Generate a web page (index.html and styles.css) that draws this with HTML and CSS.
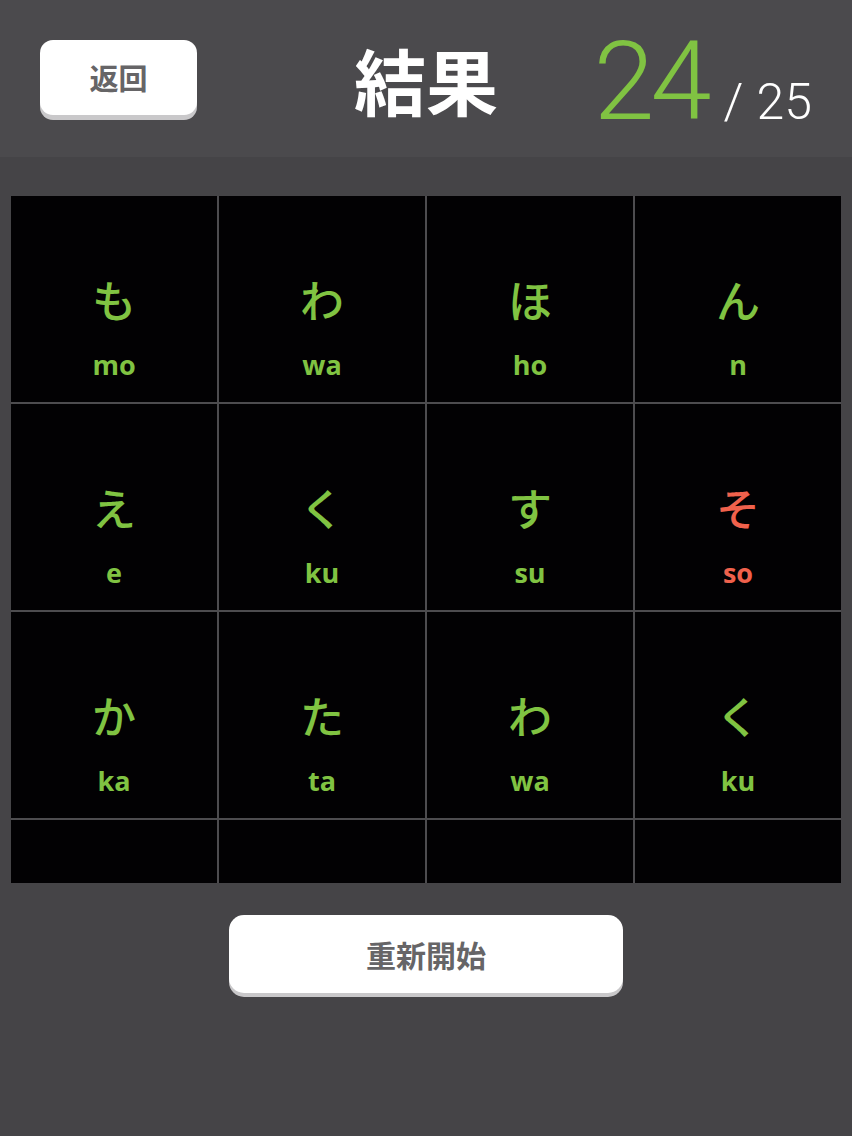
FILE: index.html
```html
<!DOCTYPE html>
<html lang="ja">
<head>
<meta charset="utf-8">
<link rel="stylesheet" href="styles.css">
</head>
<body>
<div class="page">
  <header class="header">
    <div class="left"><button class="btn back">返回</button></div>
    <h1 class="title">結果</h1>
    <div class="score"><span class="got">24</span><span class="total">/ 25</span></div>
  </header>
  <main class="board">
    <div class="grid">
      <div class="cell"><span class="kana">も</span><span class="romaji">mo</span></div>
      <div class="cell"><span class="kana">わ</span><span class="romaji">wa</span></div>
      <div class="cell"><span class="kana">ほ</span><span class="romaji">ho</span></div>
      <div class="cell"><span class="kana">ん</span><span class="romaji">n</span></div>
      <div class="cell"><span class="kana">え</span><span class="romaji">e</span></div>
      <div class="cell"><span class="kana">く</span><span class="romaji">ku</span></div>
      <div class="cell"><span class="kana">す</span><span class="romaji">su</span></div>
      <div class="cell wrong"><span class="kana">そ</span><span class="romaji">so</span></div>
      <div class="cell"><span class="kana">か</span><span class="romaji">ka</span></div>
      <div class="cell"><span class="kana">た</span><span class="romaji">ta</span></div>
      <div class="cell"><span class="kana">わ</span><span class="romaji">wa</span></div>
      <div class="cell"><span class="kana">く</span><span class="romaji">ku</span></div>
      <div class="cell"></div>
      <div class="cell"></div>
      <div class="cell"></div>
      <div class="cell"></div>
    </div>
  </main>
  <div class="actions"><button class="btn restart">重新開始</button></div>
</div>
</body>
</html>
```

FILE: styles.css
```css
* { box-sizing: border-box; }
html, body { margin: 0; padding: 0; }
body {
  background: #454447;
  font-family: "Noto Sans CJK JP", "Noto Sans", sans-serif;
  width: 852px;
  height: 1136px;
  overflow: hidden;
}
.page { display: flex; flex-direction: column; }
.header {
  height: 157px;
  background: #4b4a4d;
  display: grid;
  grid-template-columns: 1fr auto 1fr;
  align-items: center;
}
.left { padding-left: 40px; }
.btn {
  border: none;
  background: #fff;
  color: #666567;
  font-family: "Noto Sans CJK SC", "Noto Sans CJK JP", sans-serif;
  font-weight: 700;
  box-shadow: 0 5px 0 #c9c8ca;
  cursor: pointer;
  padding: 0;
}
.back {
  width: 157px;
  height: 75px;
  border-radius: 13px;
  font-size: 29px;
  margin-top: -3px;
}
.title {
  margin: 0;
  color: #fff;
  font-family: "Noto Sans CJK JP", sans-serif;
  font-weight: 700;
  font-size: 72px;
  line-height: 1;
}
.score {
  justify-self: end;
  padding-right: 40px;
  padding-top: 6px;
  display: flex;
  align-items: baseline;
  font-family: Roboto, "Liberation Sans", sans-serif;
  font-weight: 300;
  line-height: 1;
}
.got { color: #80c342; font-size: 110px; letter-spacing: -4px; }
.total { color: #fff; font-size: 50px; margin-left: 16px; word-spacing: 1px; vertical-align: 4px; }
.board {
  margin: 39px 11px 0;
  height: 687px;
  overflow: hidden;
}
.grid {
  display: grid;
  grid-template-columns: repeat(4, 1fr);
  grid-auto-rows: 206px;
  gap: 2px;
  background: #4d4c4f;
}
.cell {
  background: #020103;
  display: flex;
  flex-direction: column;
  align-items: center;
  padding-top: 78px;
  color: #80c342;
}
.cell.wrong { color: #f0614c; }
.kana {
  font-family: "Noto Sans CJK JP", sans-serif;
  font-weight: 500;
  font-size: 44px;
  line-height: 50px;
}
.romaji {
  font-family: "Open Sans", "Noto Sans", sans-serif;
  font-weight: 700;
  font-size: 27px;
  line-height: 30px;
  margin-top: 26px;
}
.actions {
  display: flex;
  justify-content: center;
  padding-top: 32px;
}
.restart {
  width: 394px;
  height: 78px;
  border-radius: 15px;
  font-size: 30px;
  box-shadow: 0 4px 0 #c9c8ca;
}
```
